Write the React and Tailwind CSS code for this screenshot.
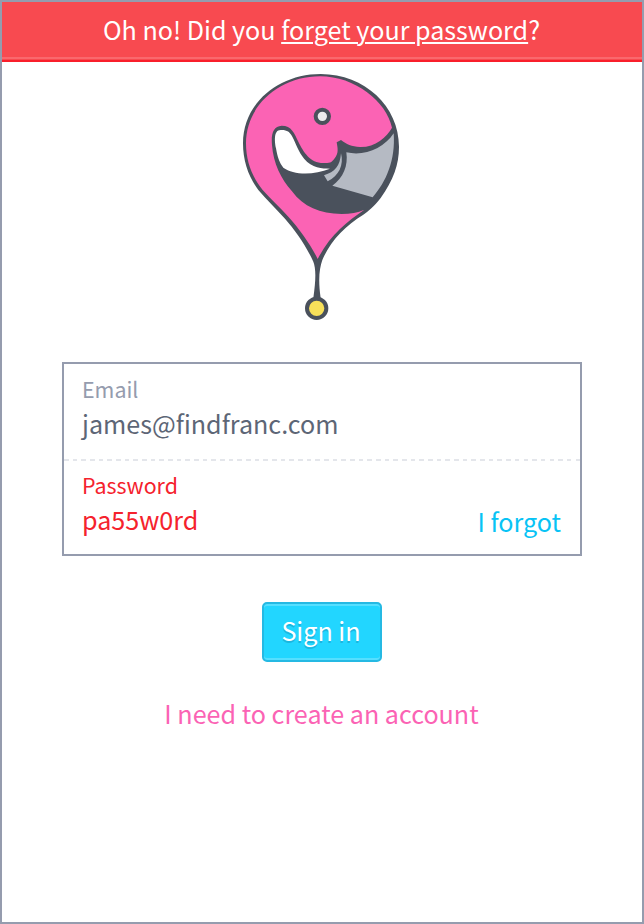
function Logo() {
  return (
    <svg className="block h-[265px] w-[175px]" viewBox="0 0 525 795" aria-hidden="true">
      <path fill="#4a515c" d="M257 27C390 27 492 125 492 245C492 300 475 345 437 399C415 427 402 437 385 449C330 482 285 530 262 585C253 610 249 645 257 699L235 699C243 645 243 610 235 590C212 540 180 495 150 461C122 431 94 403 70 375C40 335 24 288 24 235C24 115 130 27 257 27Z" />
      <path fill="#fb63b4" d="M248 582C228 540 192 490 160 455C134 427 108 403 83 375C50 334 33 288 33 235C33 120 135 34 255 34C360 34 455 110 471 188C455 217 420 247 375 246C350 245 334 238 318 225L305 232C308 250 312 265 298 281C290 293 283 294 265 294C225 294 205 260 190 230C178 205 170 182 140 182C115 184 108 205 111 240C115 295 138 342 171 379C205 425 255 447 320 447C347 447 368 443 388 434C335 470 285 510 248 582Z" />
      <path fill="#fff" d="M137 195C115 195 119 230 123 250C127 275 134 295 145 308C175 330 235 331 285 311C262 311 230 309 208 282C189 258 183 235 172 215C164 200 155 194 137 195Z" />
      <path fill="#b5bac3" d="M476 205C447 250 388 275 334 262C340 302 325 339 292 362L413 397C454 350 482 285 476 205Z" />
      <path fill="#b5bac3" d="M318 265C315 305 300 320 267 331L278 349C312 333 327 300 318 265Z" />
      <circle cx="262" cy="154" r="20" fill="#ececee" stroke="#4a515c" strokeWidth="12" />
      <circle cx="245" cy="730" r="29" fill="#f7e05a" stroke="#4a515c" strokeWidth="12" />
    </svg>
  );
}

export default function App() {
  return (
    <main className="flex h-[924px] w-[644px] flex-col items-center border-2 border-[#959cae] bg-white font-['Noto_Sans_CJK_SC','Noto_Sans',sans-serif] text-[25.12px] leading-[36px]">
      <header className="flex h-[60px] w-full shrink-0 flex-col border-b-2 border-[#f91f2b] bg-[#f84a50]">
        <p className="h-[55px] pt-[9px] pr-px text-center whitespace-nowrap text-white">
          Oh no! Did you{" "}
          <a className="underline decoration-2 underline-offset-[2px]" href="#forgot">forget your password</a>?
        </p>
        <div className="h-[2px] bg-[#fa686d]" />
      </header>
      <div className="mt-[3px] mr-[-1px] h-[265px] w-[175px] shrink-0"><Logo /></div>
      <form className="mt-8 flex h-[194px] w-[520px] shrink-0 flex-col border-2 border-[#959cae]">
        <div className="h-[95px] pt-2.5 pl-[18px]">
          <div className="text-[21.4px] leading-[30px] text-[#959cae]">Email</div>
          <div className="mt-px text-[#5d6676]">james@findfranc.com</div>
        </div>
        <div className="h-[2px] bg-[repeating-linear-gradient(90deg,#e4e6eb_0px,#e4e6eb_4.6px,transparent_4.6px,transparent_8.67px)]" />
        <div className="flex h-[93px] justify-between pt-[9px] pr-[19px] pl-[18px]">
          <div className="text-[#f5222d]">
            <div className="text-[21.4px] leading-[30px]">Password</div>
            <div className="mt-px">pa55w0rd</div>
          </div>
          <a className="mt-[33px] text-[#08c3f5]" href="#forgot">I forgot</a>
        </div>
      </form>
      <button className="mt-[46px] h-[60px] w-[120px] shrink-0 rounded-[5px] border-2 border-[#25b9e3] bg-[#22d6ff] pr-[2px] pb-1 text-white shadow-[inset_0_2px_0_#55dfff,inset_0_-2px_0_#55dfff] text-shadow-[0_2px_0_#1bb6df]">Sign in</button>
      <a className="mt-[33px] pr-px text-[#fb63b4]" href="#create">I need to create an account</a>
    </main>
  );
}
